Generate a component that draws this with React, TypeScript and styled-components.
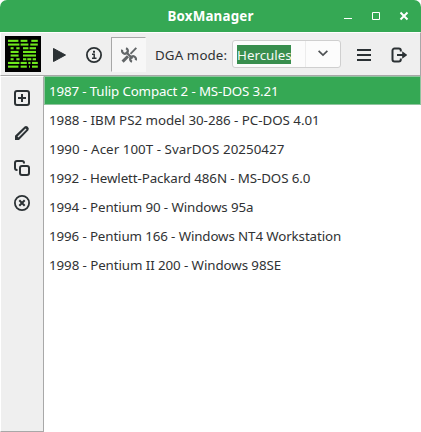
import React, { useState } from 'react';
import styled, { createGlobalStyle } from 'styled-components';

const GlobalStyle = createGlobalStyle`
  * { box-sizing: border-box; }
  body { margin: 0; background: #fff; }
`;

const INK = '#2b3134';

const Window = styled.div`
  display: flex;
  flex-direction: column;
  width: 421px;
  height: 432px;
  background: #fff;
  color: #303234;
  font: 13.33px/18px 'Noto Sans', sans-serif;
  overflow: hidden;
`;

const TitleBar = styled.header`
  display: grid;
  grid-template-columns: 87px 1fr 87px;
  align-items: center;
  height: 32px;
  flex: none;
  background: #35a854;
  border-radius: 7px 7px 0 0;
  color: #fff;
`;

const Title = styled.h1`
  grid-column: 2;
  margin: 0;
  font-size: 13.33px;
  font-weight: 700;
  letter-spacing: 0.2px;
  text-align: center;
`;

const WindowButtons = styled.div`
  display: flex;
  gap: 12px;
  padding-left: 6px;
`;

const PlainButton = styled.button`
  display: flex;
  align-items: center;
  justify-content: center;
  flex: none;
  padding: 0;
  border: 0;
  background: none;
  color: inherit;
`;

const WindowButton = styled(PlainButton)`
  width: 16px;
  height: 16px;
`;

const Toolbar = styled.div`
  display: flex;
  align-items: center;
  flex: none;
  height: 44px;
  padding-left: 4px;
  background: #efefef;
  border-top: 1px solid #fff;
  border-left: 1px solid #fff;
  border-right: 1px solid #a8a8a8;
  border-bottom: 1px solid #a8a8a8;
`;

const ToolButton = styled(PlainButton)<{ $active?: boolean }>`
  width: 35px;
  height: 35px;
  margin-top: 1px;
  color: ${({ $active }) => ($active ? '#626668' : INK)};
  background: ${({ $active }) => ($active ? '#f7f7f7' : 'none')};
  border: 1px solid transparent;
  border-top-color: ${({ $active }) => ($active ? '#a8a8a8' : 'transparent')};
  border-left-color: ${({ $active }) => ($active ? '#a8a8a8' : 'transparent')};
`;

const ModeLabel = styled.label`
  width: 77px;
  margin-left: 9px;
  padding-top: 2px;
  letter-spacing: 0.1px;
  white-space: nowrap;
`;

const ModeSelect = styled.div`
  display: flex;
  width: 109px;
  height: 28px;
  flex: none;
  border: 1px solid #cfcfcf;
  border-radius: 3px;
  background: #fcfcfc;
`;

const ModeValue = styled.div`
  display: flex;
  align-items: center;
  width: 73px;
  padding-left: 4px;
  border-right: 1px solid #ececec;
`;

const Selection = styled.span`
  height: 19px;
  line-height: 20px;
  width: 54px;
  background: #388e4e;
  color: #f4faf5;
`;

const DropButton = styled(PlainButton)`
  flex: 1;
  padding-bottom: 2px;
  color: #4d5153;
`;

const ToolbarEnd = styled.div`
  display: flex;
  padding-left: 5px;
`;

const Body = styled.div`
  display: flex;
  flex: 1;
`;

const SideBar = styled.nav`
  display: flex;
  flex-direction: column;
  align-items: center;
  width: 44px;
  flex: none;
  padding-top: 3px;
  background: #efefef;
  border: solid;
  border-width: 1px;
  border-color: #fff #a8a8a8 #a8a8a8 #fff;
`;

const SideButton = styled(PlainButton)`
  width: 35px;
  height: 35px;
  color: ${INK};
`;

const BoxList = styled.ul`
  flex: 1;
  margin: 0;
  padding: 0;
  list-style: none;
`;

const BoxRow = styled.li<{ $selected: boolean; $tracking: number }>`
  height: 29px;
  padding: 5px 0 0 4px;
  border: 1px solid ${({ $selected }) => ($selected ? '#8fc49e' : '#fff')};
  background: ${({ $selected }) => ($selected ? '#35a854' : '#fff')};
  color: ${({ $selected }) => ($selected ? '#fff' : 'inherit')};
  letter-spacing: ${({ $tracking }) => $tracking}px;
  white-space: nowrap;
`;

const boxes = [
  { name: '1987 - Tulip Compact 2 - MS-DOS 3.21', tracking: -0.14 },
  { name: '1988 - IBM PS2 model 30-286 - PC-DOS 4.01', tracking: -0.03 },
  { name: '1990 - Acer 100T - SvarDOS 20250427', tracking: 0.05 },
  { name: '1992 - Hewlett-Packard 486N - MS-DOS 6.0', tracking: -0.1 },
  { name: '1994 - Pentium 90 - Windows 95a', tracking: -0.1 },
  { name: '1996 - Pentium 166 - Windows NT4 Workstation', tracking: -0.115 },
  { name: '1998 - Pentium II 200 - Windows 98SE', tracking: -0.08 },
];

// Each stripe: top edge, then [start, width] segments.
const stripes: [number, [number, number][]][] = [
  [3.8, [[3, 10.4], [15.6, 6.8], [26.3, 6.5]]],
  [7.5, [[3, 11.4], [15.6, 7.8], [25.3, 7.5]]],
  [11.2, [[5.6, 3], [11.3, 3.3], [18, 5.4], [24.6, 6.4]]],
  [14.9, [[5.6, 8], [18, 13]]],
  [18.5, [[5.6, 8], [18, 13]]],
  [22.2, [[5.6, 3], [11.3, 3.3], [18, 3.3], [22.3, 4], [27.6, 3.4]]],
  [25.9, [[3, 11.4], [15.6, 6.2], [23.3, 2.2], [27, 5.8]]],
  [29.6, [[3, 10.4], [15.6, 6.2], [24, 1], [27, 5.8]]],
];

const Logo = () => (
  <svg width="36" height="36" viewBox="0 0 36 36">
    <path fill="#000" d="M0 0h36v36H0z" />
    {stripes.map(([y, parts]) =>
      parts.map(([x, w]) => <rect key={`${x}-${y}`} x={x} y={y} width={w} height="2.1" fill="#6fe81c" />),
    )}
  </svg>
);

const Glyph = ({ children, size = 16 }: { children: React.ReactNode; size?: number }) => (
  <svg width={size} height={size} viewBox="0 0 16 16" fill="none" stroke="currentColor" strokeWidth="2">
    {children}
  </svg>
);

export default function App() {
  const [selected, setSelected] = useState(0);
  return (
    <>
      <GlobalStyle />
      <Window>
        <TitleBar>
          <Title>BoxManager</Title>
          <WindowButtons>
            <WindowButton aria-label="Minimize">
              <Glyph><path d="M4 10.5h8" strokeWidth="1" /></Glyph>
            </WindowButton>
            <WindowButton aria-label="Maximize">
              <Glyph><path d="M4.5 4.5h7v7h-7z" strokeWidth="1" /></Glyph>
            </WindowButton>
            <WindowButton aria-label="Close">
              <Glyph><path d="m4.5 4.5 7 7m0-7-7 7" /></Glyph>
            </WindowButton>
          </WindowButtons>
        </TitleBar>
        <Toolbar>
          <Logo />
          <ToolButton aria-label="Start">
            <Glyph><path d="M2.5 1.5 14.500 8 2.500 14.500z" fill="currentColor" strokeWidth="1" strokeLinejoin="round" /></Glyph>
          </ToolButton>
          <ToolButton aria-label="Information">
            <Glyph>
              <circle cx="8" cy="8" r="7.1" strokeWidth="1.8" />
              <path d="M6 7.300h2.200v4.200M6 11.300h4.500" strokeWidth="1.5" />
              <path d="M7 3.8h2v2H7z" fill="currentColor" stroke="none" />
            </Glyph>
          </ToolButton>
          <ToolButton aria-label="Settings" $active>
            <Glyph>
              <path d="M5 5l6.500 6.500" strokeWidth="2.2" />
              <path d="M1.300 2.700A2.900 2.900 0 1 0 5 1.200M14.700 13.300A2.900 2.900 0 1 0 11 14.800" strokeWidth="2.2" />
              <path d="M15.300.8 9.500 6.800" strokeWidth="1.9" />
              <path d="M7 9.200 1.600 14.600" strokeWidth="3" />
            </Glyph>
          </ToolButton>
          <ModeLabel>DGA mode:</ModeLabel>
          <ModeSelect>
            <ModeValue><Selection>Hercules</Selection></ModeValue>
            <DropButton aria-label="Show modes">
              <Glyph size={14}><path d="m3 5.500 5 5 5-5" strokeWidth="1.9" /></Glyph>
            </DropButton>
          </ModeSelect>
          <ToolbarEnd>
            <ToolButton aria-label="Menu">
              <Glyph><path d="M1 3h14M1 8h14M1 13h14" /></Glyph>
            </ToolButton>
            <ToolButton aria-label="Exit">
              <Glyph>
                <path d="M9.800 4.500V3.500a2 2 0 0 0-2-2H3.500a2 2 0 0 0-2 2v9a2 2 0 0 0 2 2h4.300a2 2 0 0 0 2-2v-1M6 8h7" />
                <path d="m11.200 4.300 5 3.700-5 3.700z" fill="currentColor" stroke="none" />
              </Glyph>
            </ToolButton>
          </ToolbarEnd>
        </Toolbar>
        <Body>
          <SideBar>
            <SideButton aria-label="Add">
              <Glyph><rect x="1" y="1" width="14" height="14" rx="2" /><path d="M8 4v8M4 8h8" /></Glyph>
            </SideButton>
            <SideButton aria-label="Edit">
              <Glyph>
                <path d="M1 15v-4.200L10.600 1.400q1.500-1.200 3.200.4t.6 3.400L5 15z" fill="currentColor" stroke="none" />
                <path d="m4 12 8-8" stroke="#e6e7e7" strokeWidth="1.500" />
              </Glyph>
            </SideButton>
            <SideButton aria-label="Duplicate">
              <Glyph>
                <rect x="6" y="6" width="9" height="9" rx="2" />
                <path d="M3.500 10H3a2 2 0 0 1-2-2V3a2 2 0 0 1 2-2h5a2 2 0 0 1 2 2v.5" />
              </Glyph>
            </SideButton>
            <SideButton aria-label="Delete">
              <Glyph><circle cx="8" cy="8" r="7.100" strokeWidth="1.800" /><path d="m5.300 5.300 5.400 5.400m0-5.400-5.400 5.400" /></Glyph>
            </SideButton>
          </SideBar>
          <BoxList>
            {boxes.map(({ name, tracking }, i) => (
              <BoxRow key={name} $selected={i === selected} $tracking={tracking} onClick={() => setSelected(i)}>
                {name}
              </BoxRow>
            ))}
          </BoxList>
        </Body>
      </Window>
    </>
  );
}
